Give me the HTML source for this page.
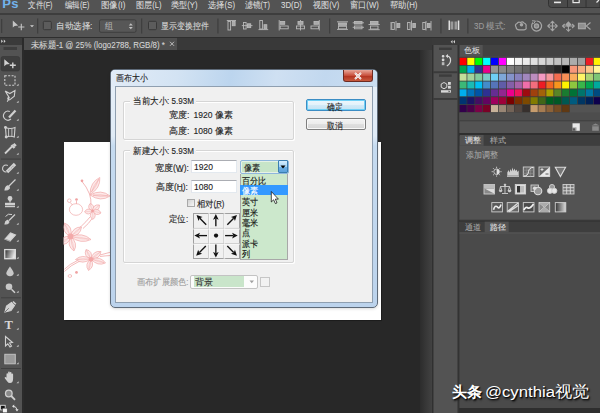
<!DOCTYPE html>
<html><head><meta charset="utf-8">
<style>
*{margin:0;padding:0;box-sizing:border-box}
html,body{width:600px;height:413px;overflow:hidden}
body{position:relative;background:#282828;font-family:"Liberation Sans",sans-serif;color:#ddd}
.a{position:absolute}
.t{position:absolute;white-space:nowrap;line-height:1;transform-origin:0 0}
.menu{font-size:8.5px;color:#dcdcdc;top:0.5px}
.ob{font-size:9px;color:#dcdcdc;top:21.5px}
.dl{font-size:8.5px;color:#1e1e1e}
.sk{-webkit-text-stroke:0.12px currentColor}
.sl{-webkit-text-stroke:0.08px currentColor}
.li{font-size:8.5px;color:#111}
</style></head><body>
<!-- menu bar -->
<div class="a" style="left:0;top:0;width:600px;height:13px;background:#535353"></div>
<div class="a" style="left:0;top:13px;width:600px;height:1.5px;background:#3d3d3d"></div>
<!-- option bar -->
<div class="a" style="left:0;top:14.5px;width:600px;height:22px;background:#535353"></div>
<div class="a" style="left:0;top:36.5px;width:600px;height:1.3px;background:#2e2e2e"></div>
<!-- tab strip -->
<div class="a" style="left:24px;top:37.8px;width:408px;height:12.2px;background:#393939"></div>
<div class="a" style="left:24px;top:37.8px;width:153px;height:12.2px;background:#4f4f4f"></div>
<!-- left toolbar -->
<div class="a" style="left:0;top:37.8px;width:22px;height:376px;background:#535353"></div>
<div class="a" style="left:0;top:37.8px;width:22px;height:6.8px;background:#3a3a3a"></div>
<div class="a" style="left:22px;top:37.8px;width:2px;height:376px;background:#2b2b2b"></div>
<!-- canvas strip -->
<div class="a" style="left:419.5px;top:50px;width:12.8px;height:363px;background:linear-gradient(90deg,#2c2c2c,#353535 40%,#424242)"></div>
<!-- document -->
<div class="a" style="left:63.6px;top:141.6px;width:317.2px;height:178.4px;background:#fff;box-shadow:0 0 1px 0.5px #1c1c1c"></div>
<!-- right dock -->
<div class="a" style="left:432px;top:37.8px;width:168px;height:7.2px;background:#3a3a3a"></div>
<div class="a" style="left:432px;top:45px;width:168px;height:368px;background:#2e2e2e"></div>
<div class="a" style="left:433.3px;top:45px;width:24.4px;height:368px;background:#535353"></div>
<div class="a" style="left:459.4px;top:45px;width:141px;height:88px;background:#535353"></div>
<div class="a" style="left:459.4px;top:136px;width:141px;height:84.3px;background:#535353"></div>
<div class="a" style="left:459.4px;top:221.7px;width:141px;height:186.3px;background:#4a4a4a"></div>
<svg class="a" style="left:0;top:0" width="600" height="413" viewBox="0 0 600 413">
<rect x="459.00" y="57.40" width="7.9" height="7.87" fill="#383838"/><rect x="459.40" y="57.85" width="7.25" height="7.1" fill="#FF0000"/>
<rect x="466.90" y="57.40" width="7.9" height="7.87" fill="#383838"/><rect x="467.30" y="57.85" width="7.25" height="7.1" fill="#FFFF00"/>
<rect x="474.80" y="57.40" width="7.9" height="7.87" fill="#383838"/><rect x="475.20" y="57.85" width="7.25" height="7.1" fill="#00FF00"/>
<rect x="482.70" y="57.40" width="7.9" height="7.87" fill="#383838"/><rect x="483.10" y="57.85" width="7.25" height="7.1" fill="#00FFFF"/>
<rect x="490.60" y="57.40" width="7.9" height="7.87" fill="#383838"/><rect x="491.00" y="57.85" width="7.25" height="7.1" fill="#0000FF"/>
<rect x="498.50" y="57.40" width="7.9" height="7.87" fill="#383838"/><rect x="498.90" y="57.85" width="7.25" height="7.1" fill="#FF00FF"/>
<rect x="506.40" y="57.40" width="7.9" height="7.87" fill="#383838"/><rect x="506.80" y="57.85" width="7.25" height="7.1" fill="#FFFFFF"/>
<rect x="514.30" y="57.40" width="7.9" height="7.87" fill="#383838"/><rect x="514.70" y="57.85" width="7.25" height="7.1" fill="#F2F2F2"/>
<rect x="522.20" y="57.40" width="7.9" height="7.87" fill="#383838"/><rect x="522.60" y="57.85" width="7.25" height="7.1" fill="#EBEBEB"/>
<rect x="530.10" y="57.40" width="7.9" height="7.87" fill="#383838"/><rect x="530.50" y="57.85" width="7.25" height="7.1" fill="#E1E1E1"/>
<rect x="538.00" y="57.40" width="7.9" height="7.87" fill="#383838"/><rect x="538.40" y="57.85" width="7.25" height="7.1" fill="#D7D7D7"/>
<rect x="545.90" y="57.40" width="7.9" height="7.87" fill="#383838"/><rect x="546.30" y="57.85" width="7.25" height="7.1" fill="#CCCCCC"/>
<rect x="553.80" y="57.40" width="7.9" height="7.87" fill="#383838"/><rect x="554.20" y="57.85" width="7.25" height="7.1" fill="#C2C2C2"/>
<rect x="561.70" y="57.40" width="7.9" height="7.87" fill="#383838"/><rect x="562.10" y="57.85" width="7.25" height="7.1" fill="#B7B7B7"/>
<rect x="569.60" y="57.40" width="7.9" height="7.87" fill="#383838"/><rect x="570.00" y="57.85" width="7.25" height="7.1" fill="#ACACAC"/>
<rect x="577.50" y="57.40" width="7.9" height="7.87" fill="#383838"/><rect x="577.90" y="57.85" width="7.25" height="7.1" fill="#A0A0A0"/>
<rect x="585.40" y="57.40" width="7.9" height="7.87" fill="#383838"/><rect x="585.80" y="57.85" width="7.25" height="7.1" fill="#ED1C24"/>
<rect x="593.30" y="57.40" width="7.9" height="7.87" fill="#383838"/><rect x="593.70" y="57.85" width="7.25" height="7.1" fill="#FFF200"/>
<rect x="459.00" y="65.27" width="7.9" height="7.87" fill="#383838"/><rect x="459.40" y="65.72" width="7.25" height="7.1" fill="#00A651"/>
<rect x="466.90" y="65.27" width="7.9" height="7.87" fill="#383838"/><rect x="467.30" y="65.72" width="7.25" height="7.1" fill="#00AEEF"/>
<rect x="474.80" y="65.27" width="7.9" height="7.87" fill="#383838"/><rect x="475.20" y="65.72" width="7.25" height="7.1" fill="#2E3192"/>
<rect x="482.70" y="65.27" width="7.9" height="7.87" fill="#383838"/><rect x="483.10" y="65.72" width="7.25" height="7.1" fill="#EC008C"/>
<rect x="490.60" y="65.27" width="7.9" height="7.87" fill="#383838"/><rect x="491.00" y="65.72" width="7.25" height="7.1" fill="#959595"/>
<rect x="498.50" y="65.27" width="7.9" height="7.87" fill="#383838"/><rect x="498.90" y="65.72" width="7.25" height="7.1" fill="#898989"/>
<rect x="506.40" y="65.27" width="7.9" height="7.87" fill="#383838"/><rect x="506.80" y="65.72" width="7.25" height="7.1" fill="#7D7D7D"/>
<rect x="514.30" y="65.27" width="7.9" height="7.87" fill="#383838"/><rect x="514.70" y="65.72" width="7.25" height="7.1" fill="#707070"/>
<rect x="522.20" y="65.27" width="7.9" height="7.87" fill="#383838"/><rect x="522.60" y="65.72" width="7.25" height="7.1" fill="#626262"/>
<rect x="530.10" y="65.27" width="7.9" height="7.87" fill="#383838"/><rect x="530.50" y="65.72" width="7.25" height="7.1" fill="#555555"/>
<rect x="538.00" y="65.27" width="7.9" height="7.87" fill="#383838"/><rect x="538.40" y="65.72" width="7.25" height="7.1" fill="#464646"/>
<rect x="545.90" y="65.27" width="7.9" height="7.87" fill="#383838"/><rect x="546.30" y="65.72" width="7.25" height="7.1" fill="#363636"/>
<rect x="553.80" y="65.27" width="7.9" height="7.87" fill="#383838"/><rect x="554.20" y="65.72" width="7.25" height="7.1" fill="#262626"/>
<rect x="561.70" y="65.27" width="7.9" height="7.87" fill="#383838"/><rect x="562.10" y="65.72" width="7.25" height="7.1" fill="#000000"/>
<rect x="569.60" y="65.27" width="7.9" height="7.87" fill="#383838"/><rect x="570.00" y="65.72" width="7.25" height="7.1" fill="#F7977A"/>
<rect x="577.50" y="65.27" width="7.9" height="7.87" fill="#383838"/><rect x="577.90" y="65.72" width="7.25" height="7.1" fill="#F9AD81"/>
<rect x="585.40" y="65.27" width="7.9" height="7.87" fill="#383838"/><rect x="585.80" y="65.72" width="7.25" height="7.1" fill="#FDC68A"/>
<rect x="593.30" y="65.27" width="7.9" height="7.87" fill="#383838"/><rect x="593.70" y="65.72" width="7.25" height="7.1" fill="#FFF79A"/>
<rect x="459.00" y="73.14" width="7.9" height="7.87" fill="#383838"/><rect x="459.40" y="73.59" width="7.25" height="7.1" fill="#C4DF9B"/>
<rect x="466.90" y="73.14" width="7.9" height="7.87" fill="#383838"/><rect x="467.30" y="73.59" width="7.25" height="7.1" fill="#A3D39C"/>
<rect x="474.80" y="73.14" width="7.9" height="7.87" fill="#383838"/><rect x="475.20" y="73.59" width="7.25" height="7.1" fill="#82CA9D"/>
<rect x="482.70" y="73.14" width="7.9" height="7.87" fill="#383838"/><rect x="483.10" y="73.59" width="7.25" height="7.1" fill="#7BCDC8"/>
<rect x="490.60" y="73.14" width="7.9" height="7.87" fill="#383838"/><rect x="491.00" y="73.59" width="7.25" height="7.1" fill="#6ECFF6"/>
<rect x="498.50" y="73.14" width="7.9" height="7.87" fill="#383838"/><rect x="498.90" y="73.59" width="7.25" height="7.1" fill="#7EA7D8"/>
<rect x="506.40" y="73.14" width="7.9" height="7.87" fill="#383838"/><rect x="506.80" y="73.59" width="7.25" height="7.1" fill="#8493CA"/>
<rect x="514.30" y="73.14" width="7.9" height="7.87" fill="#383838"/><rect x="514.70" y="73.59" width="7.25" height="7.1" fill="#8882BE"/>
<rect x="522.20" y="73.14" width="7.9" height="7.87" fill="#383838"/><rect x="522.60" y="73.59" width="7.25" height="7.1" fill="#A187BE"/>
<rect x="530.10" y="73.14" width="7.9" height="7.87" fill="#383838"/><rect x="530.50" y="73.59" width="7.25" height="7.1" fill="#BC8DBF"/>
<rect x="538.00" y="73.14" width="7.9" height="7.87" fill="#383838"/><rect x="538.40" y="73.59" width="7.25" height="7.1" fill="#F49AC2"/>
<rect x="545.90" y="73.14" width="7.9" height="7.87" fill="#383838"/><rect x="546.30" y="73.59" width="7.25" height="7.1" fill="#F6989D"/>
<rect x="553.80" y="73.14" width="7.9" height="7.87" fill="#383838"/><rect x="554.20" y="73.59" width="7.25" height="7.1" fill="#F26C4F"/>
<rect x="561.70" y="73.14" width="7.9" height="7.87" fill="#383838"/><rect x="562.10" y="73.59" width="7.25" height="7.1" fill="#F68E55"/>
<rect x="569.60" y="73.14" width="7.9" height="7.87" fill="#383838"/><rect x="570.00" y="73.59" width="7.25" height="7.1" fill="#FBAF5C"/>
<rect x="577.50" y="73.14" width="7.9" height="7.87" fill="#383838"/><rect x="577.90" y="73.59" width="7.25" height="7.1" fill="#FFF467"/>
<rect x="585.40" y="73.14" width="7.9" height="7.87" fill="#383838"/><rect x="585.80" y="73.59" width="7.25" height="7.1" fill="#ACD372"/>
<rect x="593.30" y="73.14" width="7.9" height="7.87" fill="#383838"/><rect x="593.70" y="73.59" width="7.25" height="7.1" fill="#7CC576"/>
<rect x="459.00" y="81.01" width="7.9" height="7.87" fill="#383838"/><rect x="459.40" y="81.46" width="7.25" height="7.1" fill="#3BB878"/>
<rect x="466.90" y="81.01" width="7.9" height="7.87" fill="#383838"/><rect x="467.30" y="81.46" width="7.25" height="7.1" fill="#1ABBB4"/>
<rect x="474.80" y="81.01" width="7.9" height="7.87" fill="#383838"/><rect x="475.20" y="81.46" width="7.25" height="7.1" fill="#00BFF3"/>
<rect x="482.70" y="81.01" width="7.9" height="7.87" fill="#383838"/><rect x="483.10" y="81.46" width="7.25" height="7.1" fill="#438CCA"/>
<rect x="490.60" y="81.01" width="7.9" height="7.87" fill="#383838"/><rect x="491.00" y="81.46" width="7.25" height="7.1" fill="#5574B9"/>
<rect x="498.50" y="81.01" width="7.9" height="7.87" fill="#383838"/><rect x="498.90" y="81.46" width="7.25" height="7.1" fill="#605CA8"/>
<rect x="506.40" y="81.01" width="7.9" height="7.87" fill="#383838"/><rect x="506.80" y="81.46" width="7.25" height="7.1" fill="#855FA8"/>
<rect x="514.30" y="81.01" width="7.9" height="7.87" fill="#383838"/><rect x="514.70" y="81.46" width="7.25" height="7.1" fill="#A763A8"/>
<rect x="522.20" y="81.01" width="7.9" height="7.87" fill="#383838"/><rect x="522.60" y="81.46" width="7.25" height="7.1" fill="#F06EA9"/>
<rect x="530.10" y="81.01" width="7.9" height="7.87" fill="#383838"/><rect x="530.50" y="81.46" width="7.25" height="7.1" fill="#F26D7D"/>
<rect x="538.00" y="81.01" width="7.9" height="7.87" fill="#383838"/><rect x="538.40" y="81.46" width="7.25" height="7.1" fill="#ED1C24"/>
<rect x="545.90" y="81.01" width="7.9" height="7.87" fill="#383838"/><rect x="546.30" y="81.46" width="7.25" height="7.1" fill="#F26522"/>
<rect x="553.80" y="81.01" width="7.9" height="7.87" fill="#383838"/><rect x="554.20" y="81.46" width="7.25" height="7.1" fill="#F7941D"/>
<rect x="561.70" y="81.01" width="7.9" height="7.87" fill="#383838"/><rect x="562.10" y="81.46" width="7.25" height="7.1" fill="#FFF200"/>
<rect x="569.60" y="81.01" width="7.9" height="7.87" fill="#383838"/><rect x="570.00" y="81.46" width="7.25" height="7.1" fill="#8DC63F"/>
<rect x="577.50" y="81.01" width="7.9" height="7.87" fill="#383838"/><rect x="577.90" y="81.46" width="7.25" height="7.1" fill="#39B54A"/>
<rect x="585.40" y="81.01" width="7.9" height="7.87" fill="#383838"/><rect x="585.80" y="81.46" width="7.25" height="7.1" fill="#00A651"/>
<rect x="593.30" y="81.01" width="7.9" height="7.87" fill="#383838"/><rect x="593.70" y="81.46" width="7.25" height="7.1" fill="#00A99D"/>
<rect x="459.00" y="88.88" width="7.9" height="7.87" fill="#383838"/><rect x="459.40" y="89.33" width="7.25" height="7.1" fill="#00AEEF"/>
<rect x="466.90" y="88.88" width="7.9" height="7.87" fill="#383838"/><rect x="467.30" y="89.33" width="7.25" height="7.1" fill="#0072BC"/>
<rect x="474.80" y="88.88" width="7.9" height="7.87" fill="#383838"/><rect x="475.20" y="89.33" width="7.25" height="7.1" fill="#0054A6"/>
<rect x="482.70" y="88.88" width="7.9" height="7.87" fill="#383838"/><rect x="483.10" y="89.33" width="7.25" height="7.1" fill="#2E3192"/>
<rect x="490.60" y="88.88" width="7.9" height="7.87" fill="#383838"/><rect x="491.00" y="89.33" width="7.25" height="7.1" fill="#662D91"/>
<rect x="498.50" y="88.88" width="7.9" height="7.87" fill="#383838"/><rect x="498.90" y="89.33" width="7.25" height="7.1" fill="#92278F"/>
<rect x="506.40" y="88.88" width="7.9" height="7.87" fill="#383838"/><rect x="506.80" y="89.33" width="7.25" height="7.1" fill="#EC008C"/>
<rect x="514.30" y="88.88" width="7.9" height="7.87" fill="#383838"/><rect x="514.70" y="89.33" width="7.25" height="7.1" fill="#ED145B"/>
<rect x="522.20" y="88.88" width="7.9" height="7.87" fill="#383838"/><rect x="522.60" y="89.33" width="7.25" height="7.1" fill="#9E0B0F"/>
<rect x="530.10" y="88.88" width="7.9" height="7.87" fill="#383838"/><rect x="530.50" y="89.33" width="7.25" height="7.1" fill="#A0410D"/>
<rect x="538.00" y="88.88" width="7.9" height="7.87" fill="#383838"/><rect x="538.40" y="89.33" width="7.25" height="7.1" fill="#A36209"/>
<rect x="545.90" y="88.88" width="7.9" height="7.87" fill="#383838"/><rect x="546.30" y="89.33" width="7.25" height="7.1" fill="#ABA000"/>
<rect x="553.80" y="88.88" width="7.9" height="7.87" fill="#383838"/><rect x="554.20" y="89.33" width="7.25" height="7.1" fill="#598527"/>
<rect x="561.70" y="88.88" width="7.9" height="7.87" fill="#383838"/><rect x="562.10" y="89.33" width="7.25" height="7.1" fill="#1A7B30"/>
<rect x="569.60" y="88.88" width="7.9" height="7.87" fill="#383838"/><rect x="570.00" y="89.33" width="7.25" height="7.1" fill="#007236"/>
<rect x="577.50" y="88.88" width="7.9" height="7.87" fill="#383838"/><rect x="577.90" y="89.33" width="7.25" height="7.1" fill="#00746B"/>
<rect x="585.40" y="88.88" width="7.9" height="7.87" fill="#383838"/><rect x="585.80" y="89.33" width="7.25" height="7.1" fill="#0076A3"/>
<rect x="593.30" y="88.88" width="7.9" height="7.87" fill="#383838"/><rect x="593.70" y="89.33" width="7.25" height="7.1" fill="#004B80"/>
<rect x="459.00" y="96.75" width="7.9" height="7.87" fill="#383838"/><rect x="459.40" y="97.20" width="7.25" height="7.1" fill="#003471"/>
<rect x="466.90" y="96.75" width="7.9" height="7.87" fill="#383838"/><rect x="467.30" y="97.20" width="7.25" height="7.1" fill="#1B1464"/>
<rect x="474.80" y="96.75" width="7.9" height="7.87" fill="#383838"/><rect x="475.20" y="97.20" width="7.25" height="7.1" fill="#440E62"/>
<rect x="482.70" y="96.75" width="7.9" height="7.87" fill="#383838"/><rect x="483.10" y="97.20" width="7.25" height="7.1" fill="#630460"/>
<rect x="490.60" y="96.75" width="7.9" height="7.87" fill="#383838"/><rect x="491.00" y="97.20" width="7.25" height="7.1" fill="#9E005D"/>
<rect x="498.50" y="96.75" width="7.9" height="7.87" fill="#383838"/><rect x="498.90" y="97.20" width="7.25" height="7.1" fill="#9E0039"/>
<rect x="506.40" y="96.75" width="7.9" height="7.87" fill="#383838"/><rect x="506.80" y="97.20" width="7.25" height="7.1" fill="#790000"/>
<rect x="514.30" y="96.75" width="7.9" height="7.87" fill="#383838"/><rect x="514.70" y="97.20" width="7.25" height="7.1" fill="#7B2E00"/>
<rect x="522.20" y="96.75" width="7.9" height="7.87" fill="#383838"/><rect x="522.60" y="97.20" width="7.25" height="7.1" fill="#7D4900"/>
<rect x="530.10" y="96.75" width="7.9" height="7.87" fill="#383838"/><rect x="530.50" y="97.20" width="7.25" height="7.1" fill="#827B00"/>
<rect x="538.00" y="96.75" width="7.9" height="7.87" fill="#383838"/><rect x="538.40" y="97.20" width="7.25" height="7.1" fill="#406618"/>
<rect x="545.90" y="96.75" width="7.9" height="7.87" fill="#383838"/><rect x="546.30" y="97.20" width="7.25" height="7.1" fill="#005E20"/>
<rect x="553.80" y="96.75" width="7.9" height="7.87" fill="#383838"/><rect x="554.20" y="97.20" width="7.25" height="7.1" fill="#005826"/>
<rect x="561.70" y="96.75" width="7.9" height="7.87" fill="#383838"/><rect x="562.10" y="97.20" width="7.25" height="7.1" fill="#005952"/>
<rect x="569.60" y="96.75" width="7.9" height="7.87" fill="#383838"/><rect x="570.00" y="97.20" width="7.25" height="7.1" fill="#005B7F"/>
<rect x="577.50" y="96.75" width="7.9" height="7.87" fill="#383838"/><rect x="577.90" y="97.20" width="7.25" height="7.1" fill="#003663"/>
<rect x="585.40" y="96.75" width="7.9" height="7.87" fill="#383838"/><rect x="585.80" y="97.20" width="7.25" height="7.1" fill="#002157"/>
<rect x="593.30" y="96.75" width="7.9" height="7.87" fill="#383838"/><rect x="593.70" y="97.20" width="7.25" height="7.1" fill="#0D004C"/>
<rect x="459.00" y="104.62" width="7.9" height="7.87" fill="#383838"/><rect x="459.40" y="105.07" width="7.25" height="7.1" fill="#32004B"/>
<rect x="466.90" y="104.62" width="7.9" height="7.87" fill="#383838"/><rect x="467.30" y="105.07" width="7.25" height="7.1" fill="#4B0049"/>
<rect x="474.80" y="104.62" width="7.9" height="7.87" fill="#383838"/><rect x="475.20" y="105.07" width="7.25" height="7.1" fill="#7B0046"/>
<rect x="482.70" y="104.62" width="7.9" height="7.87" fill="#383838"/><rect x="483.10" y="105.07" width="7.25" height="7.1" fill="#7A0026"/>
<rect x="490.60" y="104.62" width="7.9" height="7.87" fill="#383838"/><rect x="491.00" y="105.07" width="7.25" height="7.1" fill="#C7B299"/>
<rect x="498.50" y="104.62" width="7.9" height="7.87" fill="#383838"/><rect x="498.90" y="105.07" width="7.25" height="7.1" fill="#998675"/>
<rect x="506.40" y="104.62" width="7.9" height="7.87" fill="#383838"/><rect x="506.80" y="105.07" width="7.25" height="7.1" fill="#736357"/>
<rect x="514.30" y="104.62" width="7.9" height="7.87" fill="#383838"/><rect x="514.70" y="105.07" width="7.25" height="7.1" fill="#534741"/>
<rect x="522.20" y="104.62" width="7.9" height="7.87" fill="#383838"/><rect x="522.60" y="105.07" width="7.25" height="7.1" fill="#37302D"/>
<rect x="530.10" y="104.62" width="7.9" height="7.87" fill="#383838"/><rect x="530.50" y="105.07" width="7.25" height="7.1" fill="#C69C6D"/>
<rect x="538.00" y="104.62" width="7.9" height="7.87" fill="#383838"/><rect x="538.40" y="105.07" width="7.25" height="7.1" fill="#A67C52"/>
<rect x="545.90" y="104.62" width="7.9" height="7.87" fill="#383838"/><rect x="546.30" y="105.07" width="7.25" height="7.1" fill="#8C6239"/>
<rect x="553.80" y="104.62" width="7.9" height="7.87" fill="#383838"/><rect x="554.20" y="105.07" width="7.25" height="7.1" fill="#754C24"/>
<rect x="561.70" y="104.62" width="7.9" height="7.87" fill="#383838"/><rect x="562.10" y="105.07" width="7.25" height="7.1" fill="#603913"/>
<!-- window buttons -->
<path d="M548.5 0 V4.5 Q548.5 7.5 551.5 7.5 H600 V0" fill="#4a4a4a" stroke="#2f2f2f" stroke-width="0.9"/>
<path d="M567.5 0 V7.3 M586 0 V7.3" stroke="#2f2f2f" stroke-width="0.9"/>
<rect x="554" y="1.6" width="7" height="1.6" fill="#e8e8e8"/>
<rect x="573" y="-1" width="6.2" height="3.6" fill="none" stroke="#e8e8e8" stroke-width="1.2"/>
<path d="M596.5 2.5 L599 0" stroke="#e8e8e8" stroke-width="1.2"/>
<!-- Ps logo -->
<text x="2.2" y="8" font-family="Liberation Sans" font-weight="bold" font-size="13" fill="#72b3ec" letter-spacing="0.3">Ps</text>
<!-- option bar separators -->
<g fill="#3f3f3f"><rect x="1" y="19" width="1.3" height="14"/><rect x="37" y="18.5" width="1.3" height="15"/><rect x="141" y="18.5" width="1.3" height="15"/><rect x="217.3" y="18.5" width="1.3" height="15"/><rect x="329" y="18.5" width="1.3" height="15"/><rect x="440.3" y="18.5" width="1.3" height="15"/><rect x="467.2" y="18.5" width="1.3" height="15"/></g>
<!-- move tool icon in options -->
<path d="M12.8 20.6 L12.8 27.6 L14.6 25.9 L18.2 25.4 Z" fill="#c4c4c4"/>
<path d="M21.3 23.8 V30.2 M18.2 27 H24.4" stroke="#c4c4c4" stroke-width="1.1"/>
<path d="M30 25.2 H34 L32 27.2 Z" fill="#d0d0d0"/>
<!-- checkboxes -->
<rect x="43.3" y="21.3" width="8" height="8.4" rx="1.2" fill="#5c5c5c" stroke="#383838" stroke-width="1"/>
<rect x="148.5" y="21.3" width="8" height="8.4" rx="1.2" fill="#5c5c5c" stroke="#383838" stroke-width="1"/>
<!-- group dropdown -->
<rect x="99.5" y="19.8" width="36.5" height="12.5" rx="1.5" fill="#575757" stroke="#3e3e3e" stroke-width="1"/>
<path d="M128.8 25.4 L130.8 23.3 L132.8 25.4 Z M128.8 27.1 L130.8 29.2 L132.8 27.1 Z" fill="#c0c0c0"/>
<!-- align icons -->
<g fill="none" stroke="#b8b8b8" stroke-width="0.9">
<path d="M226.8 20.5 H236"/><rect x="228" y="21.5" width="2.6" height="8.5"/><rect x="232.3" y="21.5" width="2.8" height="4.2" fill="#a8a8a8"/>
<path d="M241.8 25.6 H252.5"/><rect x="243.5" y="22.5" width="2.6" height="6.5"/><rect x="247.5" y="23.8" width="3.2" height="3.8" fill="#a8a8a8"/>
<path d="M258.5 29.6 H268.2"/><rect x="259.8" y="20.5" width="2.6" height="8.5"/><rect x="264" y="24.7" width="2.8" height="4.2" fill="#a8a8a8"/>
<path d="M279.2 20 V30.5"/><rect x="280.2" y="21.5" width="4.5" height="2.8" fill="#a8a8a8"/><rect x="280.2" y="26" width="8" height="2.8"/>
<path d="M300.5 20 V30.5"/><rect x="298" y="21.5" width="5" height="2.8" fill="#a8a8a8"/><rect x="296.5" y="26" width="8" height="2.8"/>
<path d="M319.3 20 V30.5"/><rect x="314" y="21.5" width="4.5" height="2.8" fill="#a8a8a8"/><rect x="311" y="26" width="7.5" height="2.8"/>
<path d="M337 21.8 H348 M337 29.4 H348"/><rect x="338.5" y="23" width="8" height="2.3" fill="#a8a8a8"/><rect x="338.5" y="26.3" width="8" height="2.6"/>
<path d="M352.7 22.8 H364 M352.7 27.3 H364"/><rect x="354.5" y="21.5" width="7.5" height="2.5" fill="#a8a8a8"/><rect x="354.5" y="26" width="7.5" height="2.8"/>
<path d="M368.5 24.5 H379.7 M368.5 29.7 H379.7"/><rect x="370.5" y="21.5" width="7.5" height="2.5" fill="#a8a8a8"/><rect x="370.5" y="26" width="7.5" height="3"/>
<path d="M391 22 V30 M396 21 V30.5"/><rect x="391.8" y="22.5" width="2.5" height="7" /><rect x="397" y="23.5" width="2.8" height="4" fill="#a8a8a8"/>
<path d="M411.5 20.5 V30.5"/><rect x="407.6" y="22.5" width="2.5" height="7"/><rect x="412.8" y="23.5" width="2.6" height="4" fill="#a8a8a8"/>
<path d="M426 21 V30.5 M431 21 V30.5"/><rect x="422.8" y="22.5" width="2.5" height="7"/><rect x="427.5" y="23.5" width="2.6" height="4" fill="#a8a8a8"/>
</g>
<g fill="#e0e0e0"><rect x="448.5" y="20.5" width="1.5" height="9.5"/><rect x="457.8" y="20.5" width="1.5" height="9.5"/></g>
<g fill="#9a9a9a"><rect x="450.5" y="21.5" width="2.8" height="8"/><rect x="454.5" y="21.5" width="2.8" height="8"/></g>
<!-- 3D icons -->
<g fill="none" stroke="#a6a6a6" stroke-width="1.2">
<path d="M516 27 Q514.5 24.5 517 23.5 Q518 21.5 520.5 22.5 Q522.5 21 524 23 Q526.8 24 526 27 Q527 29.5 524 29.8 H519 Q516.3 29.8 516 27 Z"/>
<circle cx="521.5" cy="24.8" r="1.8" fill="#a6a6a6" stroke="none"/>
<path d="M533 22.5 A5 5 0 1 0 536.5 21"/>
<path d="M532 20.8 L535.5 21 L533.5 24" stroke-width="1"/>
<circle cx="536.5" cy="26" r="2.1" fill="#8a8a8a"/>
<path d="M552.5 21.5 V30.5 M548 26 H557"/>
<path d="M550.5 23.3 L552.5 21.3 L554.5 23.3 M550.5 28.7 L552.5 30.7 L554.5 28.7 M549.8 24 L547.8 26 L549.8 28 M555.2 24 L557.2 26 L555.2 28" stroke-width="1.1"/>
<path d="M568.4 21.3 L571.5 24.5 L568.4 27.6 L565.3 24.5 Z" fill="#a6a6a6" stroke="none"/>
<path d="M568.4 24 V31 M562.8 26 H574" stroke-width="1.1"/>
<path d="M566.3 29 L568.4 31.3 L570.5 29 M564.7 24 L562.6 26 L564.7 28 M572.1 24 L574.2 26 L572.1 28" stroke-width="1.1"/>
<rect x="578.5" y="23.3" width="6.8" height="5.4" fill="#8f8f8f"/>
<path d="M590.5 22.5 L586.3 26 L590.5 29.5" stroke-width="1.1"/>
</g>
<!-- tab close -->
<!-- toolbar header arrows -->
<path d="M1.2 39.5 L3 41.2 L1.2 42.9 Z M3.8 39.5 L5.6 41.2 L3.8 42.9 Z" fill="#cfcfcf"/>
<rect x="3.6" y="47" width="13.4" height="3" fill="#3e3e3e"/>
<!-- selected tool bg -->
<rect x="1" y="56.5" width="18.6" height="14.5" rx="2" fill="#3e3e3e" stroke="#353535" stroke-width="0.6"/>
<g fill="#d2d2d2" stroke="#d2d2d2">
<!-- move -->
<path d="M4.3 59.3 V66.3 L6.2 64.6 L9.8 64.1 Z" stroke="none"/>
<path d="M12.8 62.4 V68.2 M9.8 65.3 H15.8" stroke-width="1.4" fill="none"/>
</g>
<g fill="none" stroke="#d0d0d0" stroke-width="1.1">
<!-- marquee -->
<rect x="4.8" y="75.8" width="10.2" height="9.4" stroke-dasharray="2 1.4"/>
<!-- lasso -->
<path d="M5.2 91 L9.8 93.6 L15 90.6 L14.3 96.3 L10 99.6 Q8.5 100.5 7.8 98.8 Q7.5 97.3 9.2 97.6 Q8.5 99.5 7.2 101.8 M9.2 97.6 L5.2 91"/>
<!-- quick select -->
<path d="M9.8 111.5 A4.5 4.5 0 1 0 11 119"/>
<path d="M9 117.5 L15.5 110.5" stroke-width="2.2"/>
<!-- crop -->
<path d="M5.5 127.5 Q10.3 129.5 15 127.5 L14.3 137 Q10.3 135.5 6.2 137 Z" stroke-width="1.1"/>
<path d="M8.6 128.6 V136.2 M11.9 128.6 V136.2" stroke-width="0.9"/>
<circle cx="5.5" cy="127.5" r="0.9" fill="#d0d0d0"/><circle cx="6.2" cy="137" r="0.9" fill="#d0d0d0"/>
<!-- eyedropper -->
<path d="M5 153.5 L12 146.5" stroke-width="1.8"/>
<path d="M11.5 145 L14.5 148" stroke-width="2.4"/>
<path d="M13.5 143.8 L15.8 146.1" stroke-width="2.6"/>
</g>
<rect x="1" y="158.6" width="20" height="1" fill="#404040"/>
<g fill="none" stroke="#d0d0d0" stroke-width="1.1">
<!-- healing -->
<path d="M7.8 165.5 A3.5 3.5 0 1 0 6.5 172"/>
<path d="M7 172 L15 164" stroke-width="3.4"/>
<path d="M8.5 170.8 L13.8 165.5" stroke="#7a7a7a" stroke-width="0.8" stroke-dasharray="1 0.8"/>
<!-- brush -->
<path d="M9 186 L15.5 179.5" stroke-width="1.2"/>
<path d="M5 190 Q5.5 186.5 8 185.8 Q9.8 186.5 9.3 188.3 Q7.5 190.3 5 190 Z" fill="#d0d0d0"/>
<!-- stamp -->
<circle cx="10" cy="198.5" r="1.9" fill="#d0d0d0"/>
<path d="M10 200 V202.5" stroke-width="1.3"/>
<rect x="5" y="202.8" width="10" height="2.6" fill="#d0d0d0" stroke="none"/>
<rect x="5" y="206" width="10" height="1.2" fill="#d0d0d0" stroke="none"/>
<!-- history brush -->
<path d="M5.5 216.5 Q8 213 12 214.5" stroke-width="1"/>
<path d="M9 220.5 L15 214.5" stroke-width="1.2"/>
<path d="M5 224 Q5.3 221 7.5 220.3 Q9.2 221 8.8 222.6 Q7.2 224.3 5 224 Z" fill="#d0d0d0"/>
<!-- eraser -->
<path d="M5 239 L10.5 233 L15.5 235 L10 241 Z" fill="#d8d8d8"/>
<path d="M5 239 L10 241 V241.5" stroke="#888" stroke-width="0.6"/>
<!-- gradient -->
<rect x="4.8" y="249.6" width="10.5" height="9" stroke="#d8d8d8" stroke-width="1.3"/>
<!-- blur -->
<path d="M10 266.5 Q6 272 6.3 273.5 A3.8 3.6 0 0 0 13.7 273.5 Q14 272 10 266.5 Z" fill="#c8c8c8" stroke="none"/>
<!-- dodge -->
<circle cx="9" cy="286.8" r="3.3" fill="#c8c8c8" stroke="none"/>
<path d="M11.5 289.3 L15 292.8" stroke-width="1.5"/>
</g>
<rect x="1" y="297.3" width="20" height="1" fill="#404040"/>
<g fill="none" stroke="#d0d0d0" stroke-width="1.1">
<!-- pen -->
<path d="M5 312 L6.5 306 L11.5 302.5 L14.5 305.5 L11 310.5 Z" fill="#d0d0d0"/>
<path d="M13 301.5 L15.8 304.3" stroke-width="1.6"/>
<path d="M5 312 L8.8 308.2" stroke="#555" stroke-width="0.7"/>
</g>
<text x="4.5" y="328.8" font-family="Liberation Serif" font-weight="bold" font-size="12.5" fill="#d8d8d8">T</text>
<g fill="none" stroke="#d0d0d0" stroke-width="1.1">
<!-- path select -->
<path d="M5.5 336.5 V346 L7.8 343.8 L10 347 L11.5 346 L9.5 343 L12.5 342.5 Z" stroke-width="1.1"/>
<!-- rect -->
<rect x="4.8" y="354.3" width="10.5" height="9.5" fill="#9a9a9a" stroke="#c0c0c0" stroke-width="1"/>
</g>
<rect x="1" y="368" width="20" height="1" fill="#404040"/>
<g fill="#d0d0d0" stroke="none">
<!-- hand -->
<path d="M6.5 377 V374.5 Q6.5 373.3 7.3 373.3 Q8.1 373.3 8.1 374.5 V372.7 Q8.1 371.6 9 371.6 Q9.8 371.6 9.8 372.7 V373 Q9.8 372 10.7 372 Q11.5 372 11.5 373 V374.3 Q11.5 373.4 12.3 373.4 Q13.1 373.4 13.1 374.5 V378.5 Q13.1 383 10 383 Q8.3 383 7.3 381.5 L4.8 378.3 Q4.3 377.3 5.3 377 Q6 377 6.5 377.8 Z"/>
</g>
<g fill="none" stroke="#d0d0d0">
<!-- zoom -->
<circle cx="8.8" cy="393.5" r="3.3" stroke-width="1.3" fill="#8a8a8a"/>
<path d="M11.3 396 L15 399.8" stroke-width="1.8"/>
<!-- fg bg -->
</g>
<rect x="0.6" y="405.3" width="4.6" height="4.6" fill="#111" stroke="#e0e0e0" stroke-width="0.9"/>
<rect x="2.6" y="408.2" width="4.6" height="4.6" fill="#f4f4f4" stroke="#3a3a3a" stroke-width="0.5"/>
<path d="M13.2 406.2 Q16.5 406.5 17 409.8" fill="none" stroke="#e0e0e0" stroke-width="1"/>
<path d="M12 406.3 L14.2 404.6 L14.2 408 Z M17 411.6 L15.3 409.3 L18.6 409.3 Z" fill="#e0e0e0"/>
<!-- small corner triangles -->
<g fill="#c8c8c8">
<path d="M16.5 85.8 L18.6 85.8 L18.6 83.7 Z"/><path d="M16.5 102.8 L18.6 102.8 L18.6 100.7 Z"/><path d="M16.5 120.8 L18.6 120.8 L18.6 118.7 Z"/><path d="M16.5 137.8 L18.6 137.8 L18.6 135.7 Z"/><path d="M16.5 154.8 L18.6 154.8 L18.6 152.7 Z"/>
<path d="M16.5 173.8 L18.6 173.8 L18.6 171.7 Z"/><path d="M16.5 190.8 L18.6 190.8 L18.6 188.7 Z"/><path d="M16.5 207.8 L18.6 207.8 L18.6 205.7 Z"/><path d="M16.5 224.8 L18.6 224.8 L18.6 222.7 Z"/>
<path d="M16.5 241.8 L18.6 241.8 L18.6 239.7 Z"/><path d="M16.5 258.8 L18.6 258.8 L18.6 256.7 Z"/><path d="M16.5 275.8 L18.6 275.8 L18.6 273.7 Z"/><path d="M16.5 292.8 L18.6 292.8 L18.6 290.7 Z"/>
<path d="M16.5 312.8 L18.6 312.8 L18.6 310.7 Z"/><path d="M16.5 329.8 L18.6 329.8 L18.6 327.7 Z"/><path d="M16.5 346.8 L18.6 346.8 L18.6 344.7 Z"/><path d="M16.5 364.3 L18.6 364.3 L18.6 362.2 Z"/><path d="M16.5 383.3 L18.6 383.3 L18.6 381.2 Z"/>
</g>
<!-- tab x -->
<path d="M170 41.8 L174 45.8 M174 41.8 L170 45.8" stroke="#c8c8c8" stroke-width="0.9"/>
<!-- right dock header arrows -->
<path d="M452.5 40 L450.7 41.7 L452.5 43.4 Z M455 40 L453.2 41.7 L455 43.4 Z" fill="#d0d0d0"/>
<!-- icon column borders and separators -->
<rect x="432.3" y="45" width="1.2" height="368" fill="#333"/>
<rect x="457.5" y="45" width="1.9" height="368" fill="#333"/>
<rect x="433.3" y="71.3" width="24.3" height="1.9" fill="#3a3a3a"/>
<rect x="433.3" y="98" width="24.3" height="1.9" fill="#3a3a3a"/>
<rect x="439" y="47.6" width="12.7" height="2.4" fill="#3c3c3c"/>
<rect x="439" y="74.4" width="12.7" height="2.4" fill="#3c3c3c"/>
<!-- history icon -->
<g fill="#d8d8d8">
<rect x="441.8" y="55" width="2.6" height="2.6" rx="1"/><rect x="441.8" y="58.6" width="2.6" height="2.6" rx="1"/><rect x="441.8" y="62.2" width="2.6" height="3" fill="#bbb"/>
</g>
<path d="M446.8 66 Q451.2 63.5 450.5 59 Q449.8 56.3 447 56" fill="none" stroke="#d8d8d8" stroke-width="1.2"/>
<path d="M445.5 56 L448 54 L448 58.3 Z" fill="#d8d8d8"/>
<!-- properties icon -->
<path d="M444 82.5 L446.8 84 V87.2 L444 88.8 L441.2 87.2 V84 Z" fill="none" stroke="#d8d8d8" stroke-width="1"/>
<rect x="448" y="82" width="2.8" height="2.8" fill="#d8d8d8"/><rect x="448" y="85.8" width="2.8" height="2.8" fill="#d8d8d8"/>
<rect x="441" y="90.2" width="10" height="2.4" fill="#d8d8d8"/><path d="M448.5 90.5 L450.5 91.4 L448.5 92.3 Z" fill="#555"/>
<!-- swatches tabbar -->
<rect x="459.4" y="45" width="141" height="11.7" fill="#424242"/>
<rect x="460" y="45" width="22.7" height="11.7" fill="#535353"/>
<rect x="459.4" y="112.6" width="141" height="8.2" fill="#4d4d4d"/>
<rect x="459.4" y="120.3" width="141" height="1" fill="#3e3e3e"/>
<rect x="572.5" y="123.3" width="7.3" height="7.5" fill="#e8e8e8"/><path d="M572.5 127.5 L576.3 127.5 L576.3 130.8 L572.5 130.8 Z" fill="#535353"/><path d="M572.8 127.8 L575.8 127.8 L575.8 130.6" fill="none" stroke="#e8e8e8" stroke-width="0.6"/>
<path d="M591.5 125.5 L595.5 123.5 L599.5 125.5 Z M592.2 126.3 H598.8 V130.8 H592.2 Z" fill="#8a8a8a"/>
<!-- adjustments tabbar -->
<rect x="459.4" y="134.9" width="141" height="10.9" fill="#3e3e3e"/>
<rect x="460" y="134.9" width="23.6" height="10.9" fill="#535353"/><rect x="459.4" y="133.2" width="141" height="1.7" fill="#303030"/>
<rect x="459.4" y="219.7" width="141" height="2" fill="#383838"/><rect x="459.4" y="221.7" width="141" height="10.8" fill="#3e3e3e"/><rect x="459.4" y="232.4" width="141" height="1.2" fill="#555"/>
<rect x="484.7" y="221.7" width="24" height="10.8" fill="#535353"/>

<!-- adjustment icons -->
<g stroke="#cfcfcf" stroke-width="0.9" fill="none">
<!-- sun -->
<circle cx="496.6" cy="171.7" r="2.8" fill="#555" />
<path d="M496.6 171.7 m0 -2.8 a2.8 2.8 0 0 1 0 5.6 Z" fill="#e0e0e0" stroke="none"/>
<path d="M496.6 166.7 V168 M496.6 175.4 V176.7 M491.6 171.7 H492.9 M500.3 171.7 H501.6 M493.1 168.2 L494 169.1 M499.2 174.3 L500.1 175.2 M493.1 175.2 L494 174.3 M499.2 169.1 L500.1 168.2"/>
<!-- levels histogram -->
<path d="M507 176.2 H519" stroke-width="1.2"/>
<path d="M507.3 175.5 V172.5 L508.5 170 L509.5 172.5 L510.5 169 L511.5 171.5 L512.5 167.5 L513.5 171 L514.5 168.5 L515.5 171 L516.5 169.5 L517.5 172 L518.7 170.5 V175.5 Z" fill="#cfcfcf" stroke="none"/>
<!-- curves -->
<rect x="523.3" y="167" width="10.6" height="9.5" fill="#6a6a6a"/>
<path d="M526.8 167 V176.5 M530.4 167 V176.5 M523.3 170.2 H533.9 M523.3 173.4 H533.9" stroke="#999" stroke-width="0.5"/>
<path d="M524 176 Q528 176 528.5 171.7 Q529 167.5 533.3 167.5" stroke="#eee" stroke-width="1"/>
<!-- exposure -->
<rect x="539" y="167" width="10.7" height="9.5" fill="#666"/>
<path d="M539 176.5 L549.7 167 V176.5 Z" fill="#e8e8e8" stroke="none"/>
<path d="M540.5 169.5 H543.5 M542 168 V171 M545.5 174 H548.5" stroke="#eee" stroke-width="0.8"/>
<path d="M545.5 174 H548.5" stroke="#333" stroke-width="0.8"/>
<!-- vibrance -->
<path d="M555.3 167.3 H565.6 L560.4 176.5 Z" fill="#777" stroke="#ddd" stroke-width="1.1"/>
<!-- row 2 -->
<rect x="484" y="184.5" width="10.5" height="9.5" fill="#888"/>
<rect x="484" y="184.5" width="10.5" height="3.5" fill="#bbb" stroke="none"/>
<path d="M484.5 188.5 L494 193.5 V188.5 Z" fill="#ddd" stroke="none"/>
<!-- balance -->
<path d="M505 184.5 V193 M500.5 186.5 H509.5 M502 193.5 H508 M500.5 186.5 L499.5 190.5 M500.5 186.5 L501.8 190.5 M509.5 186.5 L508.3 190.5 M509.5 186.5 L510.7 190.5"/>
<path d="M499.3 190.5 A1.3 1.2 0 0 0 502 190.5 Z M508 190.5 A1.3 1.2 0 0 0 511 190.5 Z" fill="#ddd"/>
<circle cx="505" cy="184.8" r="0.8" fill="#ddd"/>
<!-- bw -->
<rect x="515.3" y="184.5" width="10.3" height="9.5" fill="#ddd"/>
<rect x="517" y="186" width="3.2" height="6.5" fill="#333" stroke="none"/>
<rect x="520.3" y="186" width="3.8" height="6.5" fill="#bbb" stroke="none"/>
<!-- photo filter -->
<rect x="531" y="185" width="7.5" height="6.5" fill="#777"/>
<circle cx="538" cy="191" r="3.8" fill="#999" stroke="#ddd" stroke-width="1.1"/>
<circle cx="534.7" cy="188.2" r="1.8" fill="#ddd" stroke="none"/>
<!-- channel mixer -->
<circle cx="552" cy="187" r="2.6" fill="#999"/>
<circle cx="550" cy="190.8" r="2.6" fill="#e8e8e8"/>
<circle cx="554.3" cy="190.8" r="2.6" fill="#e8e8e8"/>
<!-- color lookup -->
<rect x="563" y="184.5" width="11" height="9.5" fill="#777"/>
<path d="M566.7 184.5 V194 M570.3 184.5 V194 M563 187.7 H574 M563 190.8 H574" stroke="#ddd" stroke-width="0.9"/>
<!-- row 3 -->
<rect x="491.8" y="202.6" width="10.6" height="9.3" fill="#5a5a5a"/>
<path d="M493.5 209.8 Q495 204.5 497.5 207 Q499.5 209.5 501 204.5" stroke="#eee" stroke-width="1.6"/>
<rect x="507.2" y="202.6" width="11.3" height="9.3" fill="#666"/>
<path d="M507.5 211.5 L518.2 203 M509 211.7 L518.2 205.5" stroke="#ddd" stroke-width="1.4"/>
<rect x="523.3" y="202.6" width="10.7" height="9.3" fill="#4a4a4a"/>
<path d="M523.8 210 Q526 206 528 208 Q530 209 533.5 204" stroke="#f0f0f0" stroke-width="1.8"/>
<rect x="539" y="202.6" width="10.7" height="9.3" fill="#888"/>
<path d="M539 202.6 L549.7 211.9 M549.7 202.6 L539 211.9" stroke="#ddd" stroke-width="0.9"/>
<path d="M539.5 203 L544.3 207.2 L549.2 203 Z M539.5 211.5 L544.3 207.2 L549.2 211.5 Z" fill="#aaa" stroke="none"/>
</g>
<defs><linearGradient id="gm" x1="0" x2="1"><stop offset="0" stop-color="#333"/><stop offset="1" stop-color="#ddd"/></linearGradient>
<linearGradient id="gg" x1="0" x2="1" y1="0" y2="0.3"><stop offset="0" stop-color="#2a2a2a"/><stop offset="1" stop-color="#e5e5e5"/></linearGradient></defs>
<rect x="555.3" y="202.6" width="10.5" height="9.3" fill="url(#gm)" stroke="#cfcfcf" stroke-width="0.9"/>
<rect x="4.8" y="249.6" width="10.5" height="9" fill="url(#gg)" stroke="#d8d8d8" stroke-width="1.2"/>
<!-- flowers -->
<defs><clipPath id="docclip"><rect x="63.6" y="141.6" width="317" height="178"/></clipPath></defs>
<g clip-path="url(#docclip)">
<g fill="none" stroke="#ee9c9c" stroke-width="0.7">
<path d="M82 181.5 Q86.5 186.5 89.5 194 Q91.2 199 91 205"/>
<path d="M70.2 202.5 Q72.5 204.5 73.5 207 M76.5 200.8 V205.5"/>
<path d="M90 217 Q86 222 81.5 226 Q78 229 75.5 231.5 M92.5 218 Q89 223.5 83 228.5"/>
<path d="M64.4 271.5 Q71 265 79 261.5 Q90 257.5 110.5 252.2 M64.4 269.3 Q69.5 264 77.5 260.5"/>
<path d="M100 256.5 Q105 255.8 110.5 255.5"/>
</g>
<circle cx="82" cy="180.8" r="1.35" fill="#f0a2a2"/>
<circle cx="76.5" cy="199.5" r="1.35" fill="#f0a2a2"/>
<circle cx="69.3" cy="200.7" r="1.8" fill="none" stroke="#ee9c9c" stroke-width="0.6"/>
<circle cx="76.5" cy="272.4" r="1.35" fill="#f0a2a2"/>
<ellipse cx="69.9" cy="276" rx="1.8" ry="1.4" fill="none" stroke="#ee9c9c" stroke-width="0.6"/>
<ellipse cx="76" cy="209.5" rx="6.6" ry="5.8" fill="#fff" stroke="#ee9c9c" stroke-width="0.6"/>
<path d="M90.0 194.5 Q100.7 188.2 99.8 177.5 Q90.1 182.1 90.0 194.5 Z" fill="#fde9e9" stroke="#ee9c9c" stroke-width="0.6"/>
<path d="M91.5 191.9 Q93.3 185.1 98.8 179.2" fill="none" stroke="#ee9c9c" stroke-width="0.35"/>
<path d="M91.5 191.9 Q94.9 186.0 98.8 179.2" fill="none" stroke="#ee9c9c" stroke-width="0.35"/>
<path d="M91.5 191.9 Q96.5 186.9 98.8 179.2" fill="none" stroke="#ee9c9c" stroke-width="0.35"/>
<path d="M90.0 195.0 Q100.7 202.4 110.0 196.0 Q101.3 188.7 90.0 195.0 Z" fill="#fde9e9" stroke="#ee9c9c" stroke-width="0.6"/>
<path d="M93.0 195.2 Q100.1 193.5 108.0 195.9" fill="none" stroke="#ee9c9c" stroke-width="0.35"/>
<path d="M93.0 195.2 Q100.0 195.5 108.0 195.9" fill="none" stroke="#ee9c9c" stroke-width="0.35"/>
<path d="M93.0 195.2 Q99.9 197.5 108.0 195.9" fill="none" stroke="#ee9c9c" stroke-width="0.35"/>
<path d="M92.5 211.0 Q95.8 205.3 90.0 203.5 Q86.4 208.4 92.5 211.0 Z" fill="#fde9e9" stroke="#ee9c9c" stroke-width="0.6"/>
<path d="M92.1 209.9 Q91.2 207.2 90.2 204.2" fill="none" stroke="#ee9c9c" stroke-width="0.35"/>
<path d="M92.5 211.0 Q99.6 211.5 99.5 205.0 Q93.1 203.9 92.5 211.0 Z" fill="#fde9e9" stroke="#ee9c9c" stroke-width="0.6"/>
<path d="M93.5 210.1 Q96.0 208.0 98.8 205.6" fill="none" stroke="#ee9c9c" stroke-width="0.35"/>
<path d="M92.5 211.0 Q96.0 216.9 101.0 213.0 Q98.3 207.3 92.5 211.0 Z" fill="#fde9e9" stroke="#ee9c9c" stroke-width="0.6"/>
<path d="M93.8 211.3 Q96.8 212.0 100.2 212.8" fill="none" stroke="#ee9c9c" stroke-width="0.35"/>
<path d="M92.5 211.0 Q87.8 216.0 93.0 219.5 Q97.7 215.4 92.5 211.0 Z" fill="#fde9e9" stroke="#ee9c9c" stroke-width="0.6"/>
<path d="M92.6 212.3 Q92.8 215.2 93.0 218.7" fill="none" stroke="#ee9c9c" stroke-width="0.35"/>
<path d="M92.5 211.0 Q87.5 206.6 84.5 212.0 Q88.7 216.5 92.5 211.0 Z" fill="#fde9e9" stroke="#ee9c9c" stroke-width="0.6"/>
<path d="M91.3 211.2 Q88.5 211.5 85.3 211.9" fill="none" stroke="#ee9c9c" stroke-width="0.35"/>
<circle cx="92.5" cy="211" r="1.4" fill="#f0a2a2"/>
<path d="M70.5 236.6 Q73.3 226.4 64.5 223.0 Q61.1 231.8 70.5 236.6 Z" fill="#fde9e9" stroke="#ee9c9c" stroke-width="0.6"/>
<path d="M69.6 234.6 Q66.3 230.3 65.1 224.4" fill="none" stroke="#ee9c9c" stroke-width="0.35"/>
<path d="M69.6 234.6 Q68.7 229.3 65.1 224.4" fill="none" stroke="#ee9c9c" stroke-width="0.35"/>
<path d="M70.5 236.6 Q80.5 235.9 81.5 227.0 Q72.6 226.7 70.5 236.6 Z" fill="#fde9e9" stroke="#ee9c9c" stroke-width="0.6"/>
<path d="M72.2 235.2 Q75.2 230.9 80.4 228.0" fill="none" stroke="#ee9c9c" stroke-width="0.35"/>
<path d="M72.2 235.2 Q76.8 232.7 80.4 228.0" fill="none" stroke="#ee9c9c" stroke-width="0.35"/>
<path d="M70.5 236.6 Q80.9 244.6 91.0 239.5 Q82.7 231.8 70.5 236.6 Z" fill="#fde9e9" stroke="#ee9c9c" stroke-width="0.6"/>
<path d="M73.6 237.0 Q80.9 236.8 89.0 239.2" fill="none" stroke="#ee9c9c" stroke-width="0.35"/>
<path d="M73.6 237.0 Q80.6 239.3 89.0 239.2" fill="none" stroke="#ee9c9c" stroke-width="0.35"/>
<path d="M70.5 236.6 Q66.3 246.0 74.0 251.0 Q78.5 243.0 70.5 236.6 Z" fill="#fde9e9" stroke="#ee9c9c" stroke-width="0.6"/>
<path d="M71.0 238.8 Q73.5 243.5 73.7 249.6" fill="none" stroke="#ee9c9c" stroke-width="0.35"/>
<path d="M71.0 238.8 Q71.0 244.1 73.7 249.6" fill="none" stroke="#ee9c9c" stroke-width="0.35"/>
<path d="M70.5 236.6 Q60.9 235.2 60.0 244.0 Q68.6 246.1 70.5 236.6 Z" fill="#fde9e9" stroke="#ee9c9c" stroke-width="0.6"/>
<path d="M68.9 237.7 Q66.0 241.4 61.0 243.3" fill="none" stroke="#ee9c9c" stroke-width="0.35"/>
<path d="M68.9 237.7 Q64.5 239.2 61.0 243.3" fill="none" stroke="#ee9c9c" stroke-width="0.35"/>
<circle cx="70.5" cy="236.6" r="3" fill="#f3a9a9"/>
<path d="M91.0 259.0 Q93.3 251.1 86.0 249.5 Q83.2 256.4 91.0 259.0 Z" fill="#fde9e9" stroke="#ee9c9c" stroke-width="0.6"/>
<path d="M90.2 257.6 Q87.5 254.8 86.5 250.4" fill="none" stroke="#ee9c9c" stroke-width="0.35"/>
<path d="M90.2 257.6 Q89.5 253.7 86.5 250.4" fill="none" stroke="#ee9c9c" stroke-width="0.35"/>
<path d="M91.0 259.0 Q99.9 259.4 101.0 251.5 Q93.1 250.3 91.0 259.0 Z" fill="#fde9e9" stroke="#ee9c9c" stroke-width="0.6"/>
<path d="M92.5 257.9 Q95.3 254.3 100.0 252.2" fill="none" stroke="#ee9c9c" stroke-width="0.35"/>
<path d="M92.5 257.9 Q96.7 256.2 100.0 252.2" fill="none" stroke="#ee9c9c" stroke-width="0.35"/>
<path d="M91.0 259.0 Q97.5 266.7 105.5 263.0 Q100.5 255.7 91.0 259.0 Z" fill="#fde9e9" stroke="#ee9c9c" stroke-width="0.6"/>
<path d="M93.2 259.6 Q98.6 259.9 104.0 262.6" fill="none" stroke="#ee9c9c" stroke-width="0.35"/>
<path d="M93.2 259.6 Q97.9 262.1 104.0 262.6" fill="none" stroke="#ee9c9c" stroke-width="0.35"/>
<path d="M91.0 259.0 Q84.1 264.1 88.5 270.5 Q95.2 266.5 91.0 259.0 Z" fill="#fde9e9" stroke="#ee9c9c" stroke-width="0.6"/>
<path d="M90.6 260.7 Q90.9 265.0 88.8 269.4" fill="none" stroke="#ee9c9c" stroke-width="0.35"/>
<path d="M90.6 260.7 Q88.6 264.5 88.8 269.4" fill="none" stroke="#ee9c9c" stroke-width="0.35"/>
<path d="M91.0 259.0 Q82.3 253.6 75.5 259.5 Q82.7 265.0 91.0 259.0 Z" fill="#fde9e9" stroke="#ee9c9c" stroke-width="0.6"/>
<path d="M88.7 259.1 Q83.3 260.4 77.0 259.4" fill="none" stroke="#ee9c9c" stroke-width="0.35"/>
<path d="M88.7 259.1 Q83.2 258.1 77.0 259.4" fill="none" stroke="#ee9c9c" stroke-width="0.35"/>
<circle cx="91" cy="259.3" r="2.4" fill="#f3a6a6"/>
</g>
<!-- watermark -->

</svg>
<!-- texts -->
<div class="t sl" id="m0" style="left:28px;top:0.8px;font-size:8.5px;color:#dcdcdc;transform:scaleX(0.849);">文件(F)</div>
<div class="t sl" id="m1" style="left:64.5px;top:0.8px;font-size:8.5px;color:#dcdcdc;transform:scaleX(0.829);">编辑(E)</div>
<div class="t sl" id="m2" style="left:100.5px;top:0.8px;font-size:8.5px;color:#dcdcdc;transform:scaleX(0.941);">图像(I)</div>
<div class="t sl" id="m3" style="left:135.5px;top:0.8px;font-size:8.5px;color:#dcdcdc;transform:scaleX(0.898);">图层(L)</div>
<div class="t sl" id="m4" style="left:171px;top:0.8px;font-size:8.5px;color:#dcdcdc;transform:scaleX(0.903);">类型(Y)</div>
<div class="t sl" id="m5" style="left:208px;top:0.8px;font-size:8.5px;color:#dcdcdc;transform:scaleX(0.920);">选择(S)</div>
<div class="t sl" id="m6" style="left:245px;top:0.8px;font-size:8.5px;color:#dcdcdc;transform:scaleX(0.866);">滤镜(T)</div>
<div class="t sl" id="m7" style="left:281px;top:0.8px;font-size:8.5px;color:#dcdcdc;transform:scaleX(0.926);">3D(D)</div>
<div class="t sl" id="m8" style="left:312.5px;top:0.8px;font-size:8.5px;color:#dcdcdc;transform:scaleX(0.896);">视图(V)</div>
<div class="t sl" id="m9" style="left:350px;top:0.8px;font-size:8.5px;color:#dcdcdc;transform:scaleX(0.908);">窗口(W)</div>
<div class="t sl" id="m10" style="left:390px;top:0.8px;font-size:8.5px;color:#dcdcdc;transform:scaleX(0.922);">帮助(H)</div>
<div class="t sl" id="m11" style="left:55.6px;top:21.6px;font-size:9px;color:#dcdcdc;transform:scaleX(0.945);">自动选择:</div>
<div class="t sl" id="m12" style="left:104.5px;top:21.8px;font-size:9px;color:#b4b4b4;transform:scaleX(0.888);">组</div>
<div class="t sl" id="m13" style="left:160.5px;top:21.6px;font-size:9px;color:#dcdcdc;transform:scaleX(0.879);">显示变换控件</div>
<div class="t sl" id="m14" style="left:474px;top:21.6px;font-size:8.5px;color:#9c9c9c;transform:scaleX(0.937);">3D 模式:</div>
<div class="t sl" id="m15" style="left:30.5px;top:40.5px;font-size:8.5px;color:#d6d6d6;transform:scaleX(0.931);">未标题-1 @ 25% (logo2788, RGB/8) *</div>
<div class="t sl" id="m16" style="left:463.8px;top:47.3px;font-size:7.5px;color:#d6d6d6;">色板</div>
<div class="t sl" id="m17" style="left:464.9px;top:137.2px;font-size:7.8px;color:#e0e0e0;">调整</div>
<div class="t sl" id="m18" style="left:489.6px;top:137.2px;font-size:7.8px;color:#a8a8a8;">样式</div>
<div class="t sl" id="m19" style="left:465.6px;top:150.8px;font-size:9px;color:#a8a8a8;transform:scaleX(0.888);">添加调整</div>
<div class="t sl" id="m20" style="left:464.9px;top:224.2px;font-size:7.8px;color:#a8a8a8;">通道</div>
<div class="t sl" id="m21" style="left:490px;top:224.2px;font-size:7.8px;color:#e0e0e0;">路径</div>
<!-- dialog -->
<div class="a" style="left:110.2px;top:68.6px;width:268.2px;height:239.4px;border:1px solid #5e6a78;border-radius:5px;box-shadow:0 1px 3px rgba(0,0,0,.15);background:linear-gradient(#e6eff8 0px,#e0ebf6 66px,#c6dbf0 76px,#bcd3ec 100%)"></div>
<div class="a" style="left:111.2px;top:69.6px;width:266.2px;height:17px;border-radius:4px 4px 0 0;background:linear-gradient(100deg,#e2ecf7 0%,#d3e3f3 25%,#bcd5ee 45%,#cfe0f2 62%,#c2d8ef 80%,#cadef1 100%)"></div>
<div class="a" style="left:342.7px;top:69.5px;width:30.6px;height:12px;border:1px solid #6d2b22;border-top:none;border-radius:0 0 3px 3px;background:linear-gradient(#e8a89a,#c8503c 50%,#b0301e 51%,#c85a3e)"></div>
<svg class="a" style="left:352px;top:72px" width="12" height="8" viewBox="0 0 12 8"><path d="M3 1 L9 7 M9 1 L3 7" stroke="#fff" stroke-width="1.9"/><path d="M3 1 L9 7 M9 1 L3 7" stroke="#7a3020" stroke-width="0.4" opacity="0.5"/></svg>
<div class="a" style="left:114.9px;top:86.4px;width:258.5px;height:216.3px;background:#f0f0f0;border:1px solid #8f9fb0"></div>
<!-- group boxes -->
<div class="a" style="left:122.5px;top:101.2px;width:171px;height:38.6px;border:1px solid #d5d5d5;border-radius:2px;box-shadow:inset 1px 1px 0 #fff, 1px 1px 0 #fff"></div>
<div class="a" style="left:130px;top:97px;width:66px;height:9px;background:#f0f0f0"></div>
<div class="a" style="left:122.5px;top:149.8px;width:171px;height:113.5px;border:1px solid #d5d5d5;border-radius:2px;box-shadow:inset 1px 1px 0 #fff, 1px 1px 0 #fff"></div>
<div class="a" style="left:130px;top:145.5px;width:66px;height:9px;background:#f0f0f0"></div>
<!-- buttons -->
<div class="a" style="left:305.7px;top:99.3px;width:60px;height:11.8px;border:1px solid #3c8dc4;border-radius:2px;box-shadow:inset 0 0 0 1px #6fd0f6;background:linear-gradient(#eef7fc,#e2f2fb 50%,#d2eaf7 51%,#c3e2f3)"></div>
<div class="a" style="left:305.7px;top:117.8px;width:60px;height:12px;border:1px solid #7f7f7f;border-radius:2px;box-shadow:inset 0 0 0 1px #f8f8f8;background:linear-gradient(#f4f4f4,#ececec 50%,#e0e0e0 51%,#d6d6d6)"></div>
<!-- inputs -->
<div class="a" style="left:190.5px;top:160.1px;width:46px;height:13px;background:#fff;border:1px solid #abadb3;border-color:#abadb3 #e3e9ef #e3e9ef #e2e3ea"></div>
<div class="a" style="left:190.5px;top:180.3px;width:46px;height:12.5px;background:#fff;border:1px solid #abadb3;border-color:#abadb3 #e3e9ef #e3e9ef #e2e3ea"></div>
<!-- unit dropdown -->
<div class="a" style="left:239.5px;top:159.6px;width:49.2px;height:14.7px;border:1px solid #8fb6dc;border-radius:2px;background:#c7e5c8;box-shadow:inset 0 0 0 1px #e6f2e6"></div>
<div class="a" style="left:277.5px;top:160.4px;width:10.5px;height:13px;border:1px solid #3c7fb1;border-radius:1px;background:linear-gradient(#d6eeff,#a6d4f6 50%,#6fb3e8 51%,#5fa3dc)"></div>
<svg class="a" style="left:280px;top:165px" width="6" height="4" viewBox="0 0 6 4"><path d="M0.5 0.5 L5.5 0.5 L3 3.5 Z" fill="#000"/></svg>
<!-- list -->
<div class="a" style="left:239.8px;top:174.2px;width:48.6px;height:85.5px;background:#cce8cc;border:1px solid #a8a8a8;border-top:none"></div>
<div class="a" style="left:240.4px;top:185.3px;width:47.6px;height:10px;background:#3399ff"></div>
<!-- checkbox -->
<div class="a" style="left:186.8px;top:199.2px;width:8px;height:8px;border:1px solid #a9a9a9;background:linear-gradient(135deg,#d2d2d2,#f6f6f6)"></div>
<!-- anchor grid -->
<div class="a" style="left:193px;top:213px;width:46.5px;height:45.8px;background:#f0f0f0;border:1px solid #a0a0a0"></div>
<svg class="a" style="left:193px;top:213px" width="47" height="46" viewBox="0 0 46.5 45.8">
<g stroke="#c8c8c8" stroke-width="0.9"><path d="M15.3 0 V45.8 M30.5 0 V45.8 M0 15.3 H46.5 M0 30.5 H46.5"/></g>
<g stroke="#fff" stroke-width="0.6"><path d="M16.2 0 V45.8 M31.4 0 V45.8 M0 16.2 H46.5 M0 31.4 H46.5"/></g>
<path d="M13.00 11.60 L6.65 5.25" stroke="#111" stroke-width="1.35"/>
<path d="M3.40 2.00 L9.34 3.98 L6.51 5.11 L5.38 7.94 Z" fill="#111"/>
<path d="M22.60 13.20 L22.60 5.60" stroke="#111" stroke-width="1.35"/>
<path d="M22.60 1.00 L25.40 6.60 L22.60 5.40 L19.80 6.60 Z" fill="#111"/>
<path d="M34.00 11.60 L40.35 5.25" stroke="#111" stroke-width="1.35"/>
<path d="M43.60 2.00 L41.62 7.94 L40.49 5.11 L37.66 3.98 Z" fill="#111"/>
<path d="M13.80 22.50 L5.80 22.50" stroke="#111" stroke-width="1.35"/>
<path d="M1.20 22.50 L6.80 19.70 L5.60 22.50 L6.80 25.30 Z" fill="#111"/>
<path d="M31.80 22.50 L39.80 22.50" stroke="#111" stroke-width="1.35"/>
<path d="M44.40 22.50 L38.80 25.30 L40.00 22.50 L38.80 19.70 Z" fill="#111"/>
<path d="M12.60 32.90 L6.25 39.25" stroke="#111" stroke-width="1.35"/>
<path d="M3.00 42.50 L4.98 36.56 L6.11 39.39 L8.94 40.52 Z" fill="#111"/>
<path d="M22.60 31.40 L22.60 39.80" stroke="#111" stroke-width="1.35"/>
<path d="M22.60 44.40 L19.80 38.80 L22.60 40.00 L25.40 38.80 Z" fill="#111"/>
<path d="M34.00 32.90 L40.35 39.25" stroke="#111" stroke-width="1.35"/>
<path d="M43.60 42.50 L37.66 40.52 L40.49 39.39 L41.62 36.56 Z" fill="#111"/>
<circle cx="22.8" cy="22.5" r="2.1" fill="#111"/>
</svg>
<!-- extension color -->
<div class="a" style="left:190px;top:274.5px;width:67.5px;height:14.3px;border:1px solid #c3c3c3;border-radius:2px;background:#fcfcfc"></div>
<div class="a" style="left:193.7px;top:276.3px;width:50px;height:10.8px;background:#c9e5ca"></div>
<svg class="a" style="left:249px;top:280px" width="6" height="4" viewBox="0 0 6 4"><path d="M0.5 0.5 L5 0.5 L2.75 3.2 Z" fill="#a0a0a0"/></svg>
<div class="a" style="left:260px;top:277px;width:10px;height:10px;border:1px solid #c6c6c6;background:#f2f2f2"></div>
<div class="t sk" id="d0" style="left:115.5px;top:74.3px;font-size:8.5px;color:#1e1e1e;transform:scaleX(0.875);">画布大小</div>
<div class="t sk" id="d1" style="left:133px;top:97.2px;font-size:8.5px;color:#1e1e1e;transform:scaleX(0.947);">当前大小: 5.93M</div>
<div class="t sk" id="d2" style="left:169px;top:111px;font-size:8.5px;color:#1e1e1e;">宽度:</div>
<div class="t sk" id="d3" style="left:193.5px;top:111px;font-size:8.5px;color:#1e1e1e;">1920 像素</div>
<div class="t sk" id="d4" style="left:169px;top:127px;font-size:8.5px;color:#1e1e1e;">高度:</div>
<div class="t sk" id="d5" style="left:193.5px;top:127px;font-size:8.5px;color:#1e1e1e;">1080 像素</div>
<div class="t sk" id="d6" style="left:133px;top:147px;font-size:8.5px;color:#1e1e1e;transform:scaleX(0.947);">新建大小: 5.93M</div>
<div class="t sk" id="d7" style="left:154.7px;top:163.6px;font-size:8.5px;color:#1e1e1e;transform:scaleX(0.995);">宽度(W):</div>
<div class="t sk" id="d8" style="left:156px;top:182.6px;font-size:8.5px;color:#1e1e1e;transform:scaleX(0.994);">高度(H):</div>
<div class="t sk" id="d9" style="left:194px;top:163.1px;font-size:8.5px;color:#1e1e1e;">1920</div>
<div class="t sk" id="d10" style="left:194px;top:182.6px;font-size:8.5px;color:#1e1e1e;">1080</div>
<div class="t sk" id="d11" style="left:196.5px;top:199.6px;font-size:8.5px;color:#1e1e1e;transform:scaleX(0.922);">相对(R)</div>
<div class="t sk" id="d12" style="left:168.8px;top:215px;font-size:8.5px;color:#1e1e1e;transform:scaleX(0.943);">定位:</div>
<div class="t sk" id="d13" style="left:137.3px;top:278.2px;font-size:8.5px;color:#9d9d9d;transform:scaleX(0.913);">画布扩展颜色:</div>
<div class="t sk" id="d14" style="left:194.8px;top:278px;font-size:8.5px;color:#333;">背景</div>
<div class="t sk" id="d15" style="left:327.2px;top:103px;font-size:8.5px;color:#1e1e1e;transform:scaleX(0.861);">确定</div>
<div class="t sk" id="d16" style="left:327.2px;top:121.6px;font-size:8.5px;color:#1e1e1e;transform:scaleX(0.861);">取消</div>
<div class="t sk" id="d17" style="left:243.8px;top:163.6px;font-size:8.5px;color:#1e1e1e;transform:scaleX(0.9);">像素</div>
<div class="t sk" id="d18" style="left:242.2px;top:176.8px;font-size:8.5px;color:#111;transform:scaleX(0.9);">百分比</div>
<div class="t sk" id="d19" style="left:242.2px;top:186.8px;font-size:8.5px;color:#fff;transform:scaleX(0.9);">像素</div>
<div class="t sk" id="d20" style="left:242.2px;top:198.3px;font-size:8.5px;color:#111;transform:scaleX(0.9);">英寸</div>
<div class="t sk" id="d21" style="left:242.2px;top:208.5px;font-size:8.5px;color:#111;transform:scaleX(0.9);">厘米</div>
<div class="t sk" id="d22" style="left:242.2px;top:218.5px;font-size:8.5px;color:#111;transform:scaleX(0.9);">毫米</div>
<div class="t sk" id="d23" style="left:242.2px;top:228.9px;font-size:8.5px;color:#111;transform:scaleX(0.9);">点</div>
<div class="t sk" id="d24" style="left:242.2px;top:239.8px;font-size:8.5px;color:#111;transform:scaleX(0.9);">派卡</div>
<div class="t sk" id="d25" style="left:242.2px;top:250px;font-size:8.5px;color:#111;transform:scaleX(0.9);">列</div>
<svg class="a" style="left:0;top:0" width="600" height="413" viewBox="0 0 600 413">
<!-- mouse cursor -->
<path d="M271.3 191.5 V202 L273.6 199.8 L275.4 203.6 L277 202.9 L275.3 199.1 L278.4 199.1 Z" fill="#fff" stroke="#000" stroke-width="0.7" stroke-linejoin="round"/>
<!-- underlines -->
<path d="M177.3 171.3 H182.5 M179 190.8 H183.5 M214.5 207.8 H219.5" stroke="#1e1e1e" stroke-width="0.8"/>

</svg>
<div class="t" id="wm1" style="left:451.8px;top:384.2px;font-size:15px;font-weight:bold;color:#fff;text-shadow:1px 1px 1px rgba(0,0,0,.9),1px 1.5px 2px rgba(0,0,0,.6)">头条</div>
<div class="t" id="wm2" style="left:485px;top:383.7px;font-size:15.5px;transform:scaleX(1.08);color:#fff;text-shadow:1px 1px 1px rgba(0,0,0,.9),1px 1.5px 2px rgba(0,0,0,.6)">@cynthia视觉</div>
</body></html>
